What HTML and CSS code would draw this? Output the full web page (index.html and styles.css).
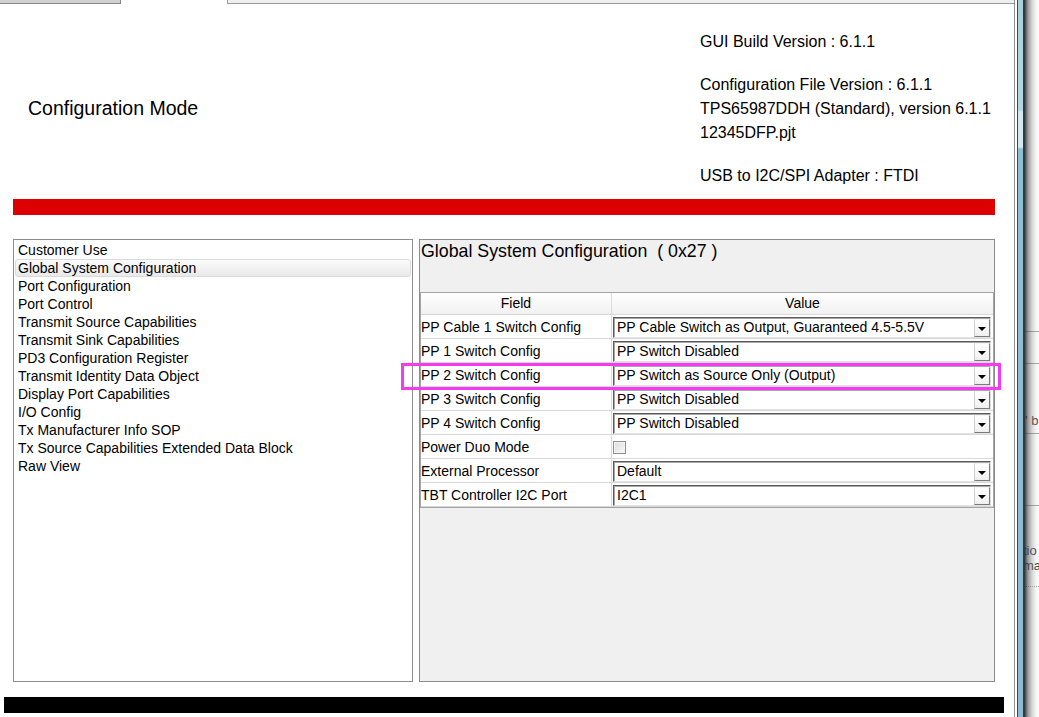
FILE: index.html
```html
<!DOCTYPE html>
<html lang="en">
<head>
<meta charset="utf-8">
<title>Configuration Mode</title>
<link rel="stylesheet" href="styles.css">
</head>
<body>
<div class="screen">
  <div class="app">
    <div class="tabs">
      <div class="tab"></div>
      <div class="tab tab-sel"></div>
      <div class="tab-fill"></div>
    </div>
    <div class="content">
      <header class="head">
        <h1 class="mode">Configuration Mode</h1>
        <div class="info">
          <div class="group">
            <p>GUI Build Version : 6.1.1</p>
          </div>
          <div class="group">
            <p>Configuration File Version : 6.1.1</p>
            <p>TPS65987DDH (Standard), version 6.1.1</p>
            <p>12345DFP.pjt</p>
          </div>
          <div class="group">
            <p>USB to I2C/SPI Adapter : FTDI</p>
          </div>
        </div>
      </header>
      <div class="redbar"></div>
      <div class="panels">
        <ul class="tree">
          <li>Customer Use</li>
          <li class="sel">Global System Configuration</li>
          <li>Port Configuration</li>
          <li>Port Control</li>
          <li>Transmit Source Capabilities</li>
          <li>Transmit Sink Capabilities</li>
          <li>PD3 Configuration Register</li>
          <li>Transmit Identity Data Object</li>
          <li>Display Port Capabilities</li>
          <li>I/O Config</li>
          <li>Tx Manufacturer Info SOP</li>
          <li>Tx Source Capabilities Extended Data Block</li>
          <li>Raw View</li>
        </ul>
        <section class="detail">
          <h2 class="detail-title">Global System Configuration&nbsp;&nbsp;( 0x27 )</h2>
          <table class="grid">
            <thead>
              <tr><th class="c-field">Field</th><th class="c-value">Value</th></tr>
            </thead>
            <tbody>
              <tr><td>PP Cable 1 Switch Config</td><td><div class="combo"><span>PP Cable Switch as Output, Guaranteed 4.5-5.5V</span><i class="arrow"></i></div></td></tr>
              <tr><td>PP 1 Switch Config</td><td><div class="combo"><span>PP Switch Disabled</span><i class="arrow"></i></div></td></tr>
              <tr><td>PP 2 Switch Config</td><td><div class="combo"><span>PP Switch as Source Only (Output)</span><i class="arrow"></i></div></td></tr>
              <tr><td>PP 3 Switch Config</td><td><div class="combo"><span>PP Switch Disabled</span><i class="arrow"></i></div></td></tr>
              <tr><td>PP 4 Switch Config</td><td><div class="combo"><span>PP Switch Disabled</span><i class="arrow"></i></div></td></tr>
              <tr><td>Power Duo Mode</td><td><div class="check"></div></td></tr>
              <tr><td>External Processor</td><td><div class="combo"><span>Default</span><i class="arrow"></i></div></td></tr>
              <tr><td>TBT Controller I2C Port</td><td><div class="combo"><span>I2C1</span><i class="arrow"></i></div></td></tr>
            </tbody>
          </table>
        </section>
      </div>
      <div class="blackbar"></div>
    </div>
  </div>
  <div class="frame"></div>
  <div class="bgwin">
    <div class="bg-line l1"></div>
    <div class="bg-line l2"></div>
    <div class="bg-text t1">"&nbsp;b</div>
    <div class="bg-line l3"></div>
    <div class="bg-line l4"></div>
    <div class="bg-text t2">tio</div>
    <div class="bg-text t3">ma</div>
    <div class="bg-line l5"></div>
    <div class="shade"></div>
  </div>
  <div class="highlight"></div>
</div>
</body>
</html>
```

FILE: styles.css
```css
html, body {
  margin: 0;
  padding: 0;
  background: #ffffff;
}

body {
  font-family: "Liberation Sans", Arial, sans-serif;
  color: #000;
}

.screen {
  position: relative;
  width: 1039px;
  height: 717px;
  display: flex;
  overflow: hidden;
  background: #fff;
}

/* ---------- main application pane ---------- */
.app {
  width: 1015px;
  flex: none;
  box-sizing: border-box;
  border-right: 1px solid #8e8e8e;
  display: flex;
  flex-direction: column;
}

.tabs {
  display: flex;
  height: 4px;
  flex: none;
}

.tab {
  width: 121px;
  box-sizing: border-box;
  background: #d2d2d2;
  border-right: 1px solid #888888;
  border-bottom: 1px solid #888888;
}

.tab-sel {
  width: 106px;
  background: #fff;
  border: none;
}

.tab-fill {
  flex: 1;
  box-sizing: border-box;
  background: #efefef;
  border-left: 1px solid #9a9a9a;
  border-bottom: 1px solid #9a9a9a;
}

.content {
  display: flex;
  flex-direction: column;
}

.head {
  height: 195px;
  display: grid;
  grid-template-columns: 700px 1fr;
}

.mode {
  margin: 92px 0 0 0;
  padding-left: 28px;
  font-size: 19.5px;
  font-weight: normal;
  line-height: 24px;
}

.info {
  padding-top: 26px;
  font-size: 16px;
}

.info .group + .group {
  margin-top: 19px;
}

.info p {
  margin: 0;
  line-height: 24px;
  white-space: nowrap;
}

.redbar {
  margin-left: 13px;
  width: 982px;
  height: 16px;
  background: #dd0000;
}

/* ---------- panels ---------- */
.panels {
  margin-top: 24px;
  margin-left: 13px;
  display: flex;
  gap: 6px;
  height: 443px;
}

.tree {
  width: 400px;
  box-sizing: border-box;
  margin: 0;
  padding: 1px 0 0 0;
  list-style: none;
  background: #fff;
  border: 1px solid #8b8b91;
  font-size: 14px;
}

.tree li {
  height: 18px;
  line-height: 18px;
  padding-left: 4px;
  white-space: nowrap;
}

.tree li.sel {
  margin: 0 1px;
  padding-left: 2px;
  box-sizing: border-box;
  line-height: 16px;
  border: 1px solid #dadada;
  border-radius: 3px;
  background: linear-gradient(#fbfbfb, #e9e9e9);
}

.detail {
  width: 576px;
  box-sizing: border-box;
  background: #f0f0f0;
  border: 1px solid #8b8b8b;
}

.detail-title {
  margin: 0;
  height: 52px;
  font-size: 17.8px;
  font-weight: normal;
  line-height: 22px;
  padding-left: 1px;
  white-space: nowrap;
}

.grid {
  width: 574px;
  border-collapse: separate;
  border-spacing: 0;
  table-layout: fixed;
  background: #fff;
  border: 1px solid #a4a4a4;
  font-size: 14px;
}

.grid th {
  height: 22px;
  padding: 0;
  box-sizing: border-box;
  font-weight: normal;
  text-align: center;
  background: linear-gradient(#ffffff, #f1f1f1);
  border-bottom: 1px solid #d8d8d8;
  border-right: 1px solid #dadada;
  line-height: 21px;
}

.grid .c-field {
  width: 191px;
}

.grid .c-value {
  border-right: none;
}

.grid td {
  height: 24px;
  box-sizing: border-box;
  padding: 1px 0 0 0;
  border-bottom: 1px solid #d8d8d8;
  border-right: 1px solid #dadada;
  vertical-align: top;
  white-space: nowrap;
}

.grid td:last-child {
  border-right: none;
}

.grid td:first-child {
  line-height: 22px;
}

.combo {
  margin: 1px 2px 0 1px;
  height: 21px;
  box-sizing: border-box;
  display: flex;
  align-items: center;
  background: #fff;
  border-top: 1px solid #5a5a5a;
  border-left: 1px solid #5a5a5a;
  border-right: 1px solid #e2e2e2;
  border-bottom: 1px solid #e2e2e2;
  box-shadow: inset 1px 1px 0 #a8a8a8;
}

.combo span {
  flex: 1;
  padding-left: 3px;
  line-height: 19px;
  overflow: hidden;
}

.arrow {
  position: relative;
  width: 16px;
  height: 18px;
  margin-top: 1px;
  box-sizing: border-box;
  align-self: flex-start;
  background: linear-gradient(#ffffff, #f0f0f0);
  border-left: 1px solid #d0d0d0;
  border-top: 1px solid #f6f6f6;
  border-right: 1px solid #7a7a7a;
  border-bottom: 1px solid #7a7a7a;
}

.arrow::after {
  content: "";
  position: absolute;
  left: 3px;
  top: 7px;
  border-left: 4px solid transparent;
  border-right: 4px solid transparent;
  border-top: 4px solid #000;
}

.check {
  margin: 5px 0 0 1px;
  width: 13px;
  height: 13px;
  box-sizing: border-box;
  border: 1px solid #8e8f8f;
  background: linear-gradient(135deg, #dcdcdc, #f8f8f8);
  box-shadow: inset 0 0 0 1px #f4f4f4;
}

.blackbar {
  margin-top: 15px;
  margin-left: 4px;
  width: 1000px;
  height: 16px;
  background: #000;
}

/* ---------- window frame / background window ---------- */
.frame {
  flex: none;
  width: 8px;
  margin-left: 2px;
  box-sizing: border-box;
  border-left: 1px solid #3b4a52;
  border-right: 2px solid #2e3a40;
  background: linear-gradient(#a9cfde 0, #b4d6e3 110px, #d4e8f0 112px, #d4e8f0 147px, #8fbdd2 149px, #8fbbd0 100%);
}

.bgwin {
  position: relative;
  flex: 1;
  background: #fff;
  overflow: hidden;
}

.bg-line {
  position: absolute;
  left: 0;
  right: 0;
  height: 1px;
  background: #9a9a9a;
}

.l1 { top: 331px; }
.l2 { top: 363px; }
.l3 { top: 433px; }
.l4 { top: 505px; }
.l5 {
  top: 586px;
  background: none;
  border-top: 1px dotted #9a9a9a;
}

.bg-text {
  position: absolute;
  left: -2px;
  font-size: 13px;
  line-height: 15px;
  color: #2a2a2a;
  white-space: nowrap;
}

.t1 { top: 413px; color: #4a3030; }
.t2 { top: 543px; color: #1f2b4f; }
.t3 { top: 558px; color: #2a2a2a; }

.shade {
  position: absolute;
  inset: 0;
  background: linear-gradient(to right, rgba(40,40,40,0.85) 0, rgba(90,90,90,0.6) 3px, rgba(150,150,150,0.4) 7px, rgba(200,200,200,0.2) 11px, rgba(220,220,220,0.1) 14px);
}

/* annotation overlay */
.highlight {
  position: absolute;
  left: 401px;
  top: 363px;
  width: 600px;
  height: 27px;
  box-sizing: border-box;
  border: 3px solid #f43af2;
  pointer-events: none;
}
```
